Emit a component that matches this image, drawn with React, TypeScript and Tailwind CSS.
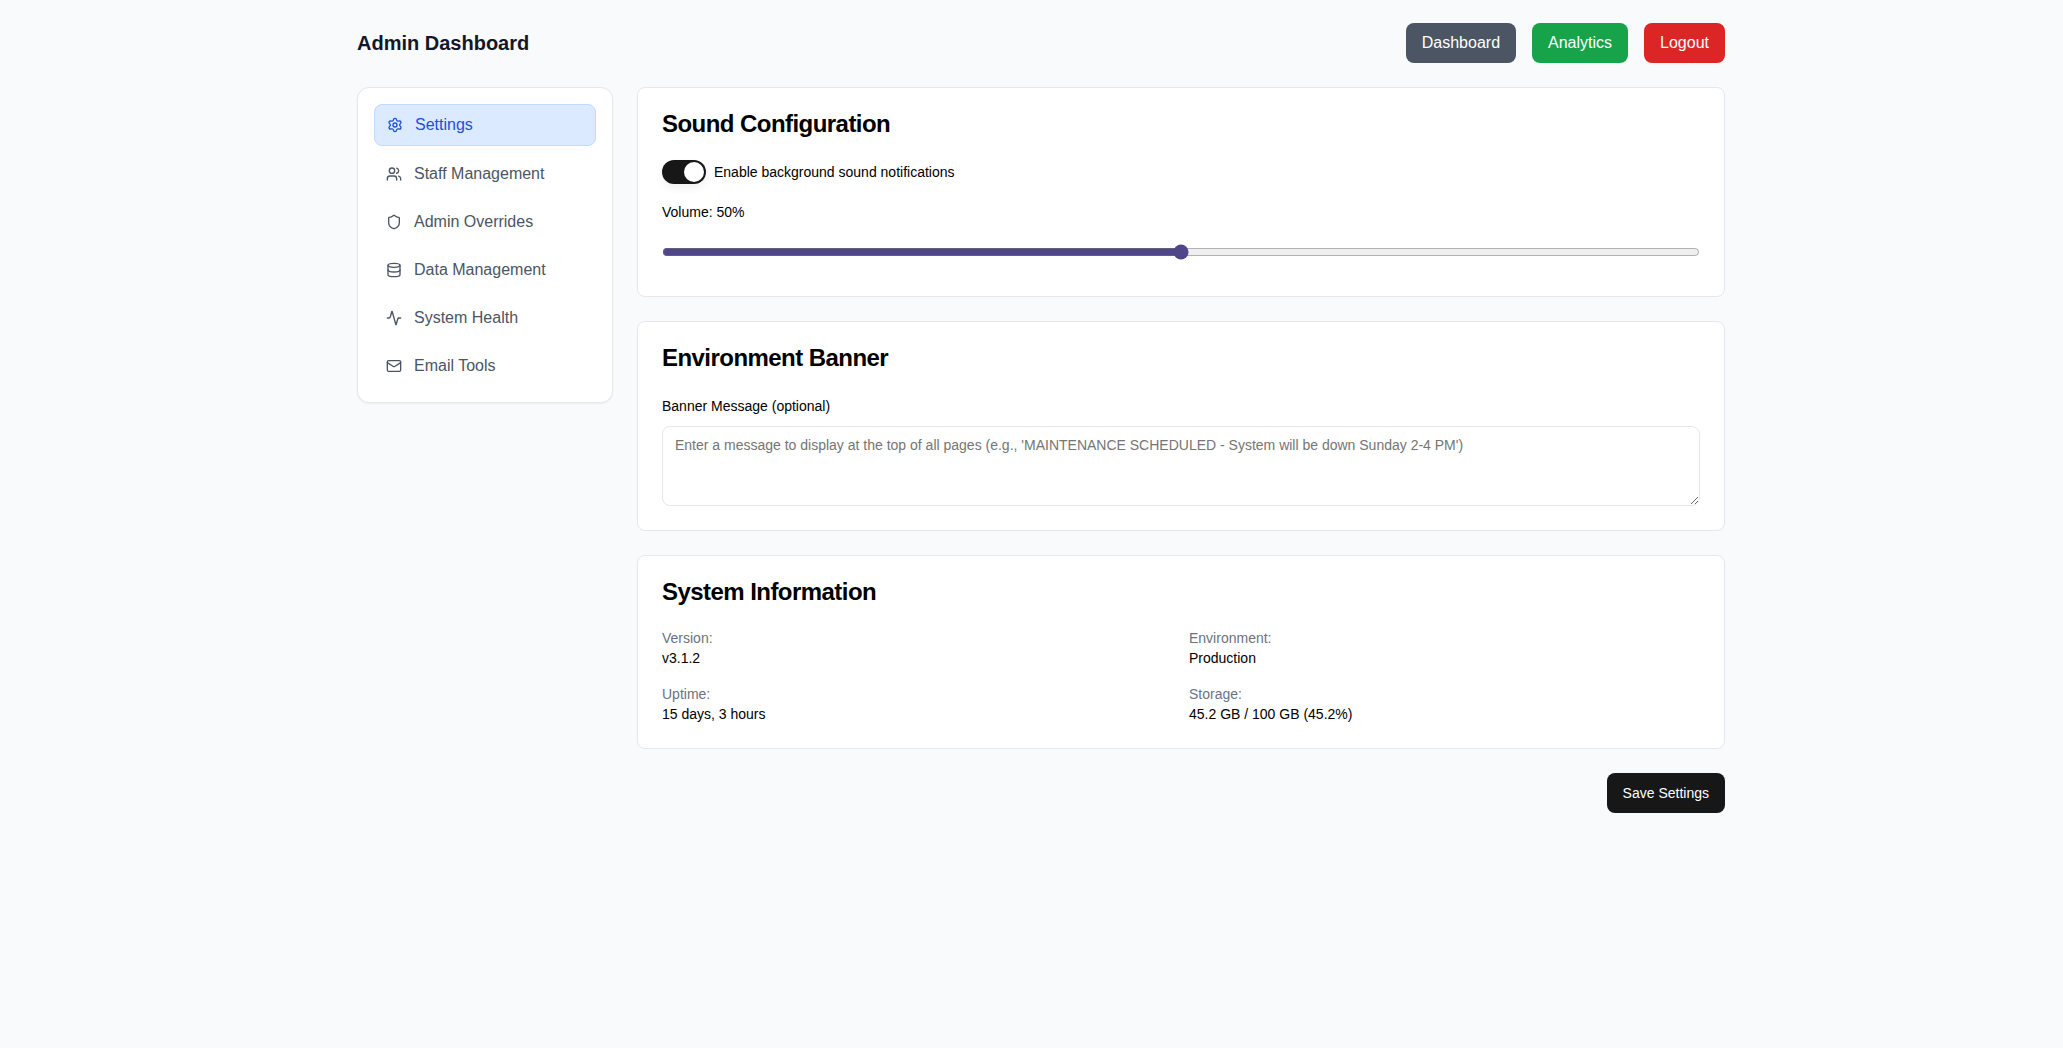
import { Settings, Users, Shield, Database, Activity, Mail } from "lucide-react";

const nav = [
  { label: "Settings", Icon: Settings, active: true },
  { label: "Staff Management", Icon: Users },
  { label: "Admin Overrides", Icon: Shield },
  { label: "Data Management", Icon: Database },
  { label: "System Health", Icon: Activity },
  { label: "Email Tools", Icon: Mail },
];

const info = [
  ["Version:", "v3.1.2"],
  ["Environment:", "Production"],
  ["Uptime:", "15 days, 3 hours"],
  ["Storage:", "45.2 GB / 100 GB (45.2%)"],
];

export default function App() {
  return (
    <div className="min-h-[1048px] bg-[#f9fafb] text-black font-['Liberation_Sans',Arial,sans-serif]">
      <div className="ml-[357px] w-[1368px] pt-[23px]">
        <header className="flex items-center justify-between h-10">
          <h1 className="text-xl font-bold text-[#111827]">Admin Dashboard</h1>
          <div className="flex gap-4">
            <button className="h-10 px-4 rounded-lg bg-[#4b5563] text-white text-base">Dashboard</button>
            <button className="h-10 px-4 rounded-lg bg-[#16a34a] text-white text-base">Analytics</button>
            <button className="h-10 px-4 rounded-lg bg-[#dc2626] text-white text-base">Logout</button>
          </div>
        </header>

        <div className="flex gap-6 mt-6 items-start">
          <aside className="w-[256px] shrink-0 bg-white border border-[#e5e7eb] rounded-xl p-4 shadow-xs">
            <nav className="flex flex-col gap-2">
              {nav.map(({ label, Icon, active }) => (
                <a
                  key={label}
                  className={
                    active
                      ? "flex items-center gap-3 h-[42px] px-3 rounded-lg bg-[#dbeafe] border border-[#bfdbfe] text-[#1d4ed8] text-base"
                      : "flex items-center gap-3 h-10 px-3 rounded-lg text-[#4b5563] text-base"
                  }
                >
                  <Icon className="w-4 h-4" />
                  <span>{label}</span>
                </a>
              ))}
            </nav>
          </aside>

          <main className="flex-1 min-w-0 flex flex-col gap-6">
            <section className="bg-white border border-[#e5e7eb] rounded-lg p-6">
              <h2 className="text-2xl leading-[24px] tracking-[-0.55px] font-bold">Sound Configuration</h2>
              <div className="flex items-center gap-2 mt-6">
                <span className="w-11 h-6 rounded-full bg-[#171717] flex items-center justify-end pr-0.5 shadow-[0_4px_8px_rgba(0,0,0,0.06)]">
                  <span className="w-5 h-5 rounded-full bg-white" />
                </span>
                <span className="text-sm">Enable background sound notifications</span>
              </div>
              <p className="text-sm mt-[18px] leading-5">Volume: 50%</p>
              <input
                type="range"
                defaultValue={50}
                className="block w-full mt-[22px] mb-3 accent-[#4f4689]"
              />
            </section>

            <section className="bg-white border border-[#e5e7eb] rounded-lg p-6">
              <h2 className="text-2xl leading-[24px] tracking-[-0.55px] font-bold">Environment Banner</h2>
              <label className="block text-sm leading-5 mt-[26px] mb-[10px]">Banner Message (optional)</label>
              <textarea
                className="block w-full h-20 px-3 py-2 text-sm border border-[#e5e7eb] rounded-lg outline-none placeholder:text-[#757575]"
                placeholder="Enter a message to display at the top of all pages (e.g., 'MAINTENANCE SCHEDULED - System will be down Sunday 2-4 PM')"
              />
            </section>

            <section className="bg-white border border-[#e5e7eb] rounded-lg p-6">
              <h2 className="text-2xl leading-[24px] tracking-[-0.55px] font-bold">System Information</h2>
              <div className="grid grid-cols-2 gap-4 mt-6 text-sm">
                {info.map(([k, v]) => (
                  <div key={k}>
                    <div className="text-[#6b7280] leading-5">{k}</div>
                    <div className="leading-5">{v}</div>
                  </div>
                ))}
              </div>
            </section>

            <div className="flex justify-end">
              <button className="h-10 px-4 rounded-lg bg-[#171717] text-white text-sm">Save Settings</button>
            </div>
          </main>
        </div>
      </div>
    </div>
  );
}
